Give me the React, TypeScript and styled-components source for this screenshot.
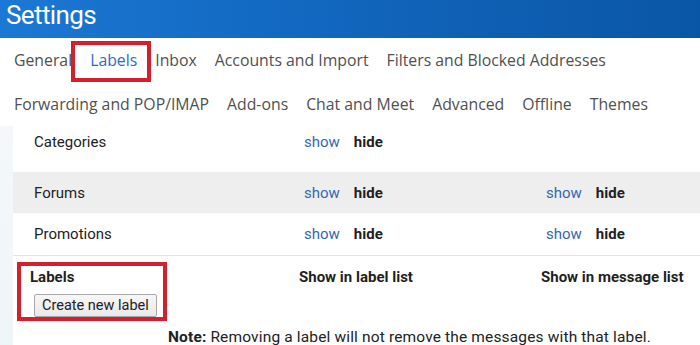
import styled, { createGlobalStyle } from "styled-components";

const GlobalStyle = createGlobalStyle`
  html, body {
    margin: 0;
    padding: 0;
    background: #ffffff;
  }
  body {
    font-family: Roboto, "Liberation Sans", sans-serif;
    width: 700px;
    height: 345px;
    overflow: hidden;
  }
`;

const Header = styled.header`
  height: 38px;
  background: linear-gradient(90deg, #1b78d4 0%, #1267be 45%, #0a56a6 100%);
  display: flex;
  align-items: flex-start;
  padding-left: 6px;
`;

const Title = styled.h1`
  margin: 1px 0 0;
  font-family: Roboto, sans-serif;
  font-weight: 400;
  font-size: 26px;
  line-height: 28px;
  letter-spacing: -0.6px;
  color: #ffffff;
`;

const TabRow = styled.nav`
  height: 44px;
  display: flex;
  align-items: center;
  gap: 18px;
  padding-left: 14px;
`;

const Tab = styled.span<{ $active?: boolean; $marked?: boolean }>`
  position: relative;
  font-family: "Open Sans", sans-serif;
  font-size: 15.8px;
  line-height: 22px;
  color: ${p => (p.$active ? "#2a6cc2" : "#505050")};
  white-space: nowrap;
  &::after {
    content: "";
    display: ${p => (p.$marked ? "block" : "none")};
    position: absolute;
    left: -19px;
    right: -14px;
    top: -8px;
    bottom: -11px;
    border: 4px solid #d41f2c;
  }
`;

const Body = styled.div`
  display: flex;
`;

const Strip = styled.div`
  width: 13px;
  flex: none;
  background: linear-gradient(180deg, #f4f8fb, #eef5f9);
`;

const Content = styled.div`
  flex: 1;
`;

const Row = styled.div<{ $shaded?: boolean; $height: number; $bottom?: number }>`
  display: grid;
  grid-template-columns: 270px 242px 1fr;
  align-items: center;
  height: ${p => p.$height}px;
  padding-left: 21px;
  padding-bottom: ${p => p.$bottom ?? 0}px;
  background: ${p => (p.$shaded ? "#eeeeee" : "#ffffff")};
  font-size: 15px;
  color: #222222;
`;

const Divider = styled.div`
  height: 1px;
  background: #e3e3e3;
`;

const Actions = styled.div`
  display: flex;
  gap: 14px;
`;

const Show = styled.span`
  color: #3467ae;
`;

const Hide = styled.span`
  font-weight: 700;
  color: #1f1f1f;
`;

const LabelsRow = styled.div`
  display: grid;
  grid-template-columns: 286px 242px 1fr;
  padding-top: 13px;
  font-size: 15px;
  font-weight: 700;
  color: #1f1f1f;
`;

const LabelsCell = styled.div`
  position: relative;
  padding-left: 17px;
  &::after {
    content: "";
    position: absolute;
    left: 4px;
    width: 142px;
    top: -7px;
    height: 51px;
    border: 4px solid #d41f2c;
  }
`;

const ColumnHead = styled.div`
  line-height: 17px;
`;

const CreateButton = styled.button`
  display: block;
  margin: 8px 0 0 4px;
  height: 23px;
  padding: 0 7px;
  font-family: Roboto, "Liberation Sans", sans-serif;
  font-size: 14.5px;
  color: #222222;
  background: linear-gradient(180deg, #f7f7f7, #e9e9e9);
  border: 1px solid #a9a9a9;
  border-radius: 2px;
`;

const Note = styled.p`
  margin: 11px 0 0 155px;
  font-size: 15.5px;
  letter-spacing: 0.15px;
  color: #222222;
  white-space: nowrap;
  b {
    font-weight: 700;
  }
`;

const tabsTop = [
  { name: "General" },
  { name: "Labels", active: true },
  { name: "Inbox" },
  { name: "Accounts and Import" },
  { name: "Filters and Blocked Addresses" },
];

const tabsBottom = ["Forwarding and POP/IMAP", "Add-ons", "Chat and Meet", "Advanced", "Offline", "Themes"];

const categories = [
  { name: "Forums", shaded: true, height: 41 },
  { name: "Promotions", shaded: false, height: 42 },
];

function App() {
  return (
    <>
      <GlobalStyle />
      <Header>
        <Title>Settings</Title>
      </Header>
      <TabRow>
        {tabsTop.map(t => (
          <Tab key={t.name} $active={t.active} $marked={t.active}>
            {t.name}
          </Tab>
        ))}
      </TabRow>
      <TabRow>
        {tabsBottom.map(t => (
          <Tab key={t}>{t}</Tab>
        ))}
      </TabRow>
      <Body>
        <Strip />
        <Content>
          <Row $height={32} $bottom={14}>
            <span>Categories</span>
            <Actions>
              <Show>show</Show>
              <Hide>hide</Hide>
            </Actions>
          </Row>
          {categories.map(c => (
            <Row key={c.name} $shaded={c.shaded} $height={c.height}>
              <span>{c.name}</span>
              <Actions>
                <Show>show</Show>
                <Hide>hide</Hide>
              </Actions>
              <Actions>
                <Show>show</Show>
                <Hide>hide</Hide>
              </Actions>
            </Row>
          ))}
          <Divider />
          <LabelsRow>
            <LabelsCell>
              <ColumnHead>Labels</ColumnHead>
              <CreateButton>Create new label</CreateButton>
            </LabelsCell>
            <ColumnHead>Show in label list</ColumnHead>
            <ColumnHead>Show in message list</ColumnHead>
          </LabelsRow>
          <Note>
            <b>Note:</b> Removing a label will not remove the messages with that label.
          </Note>
        </Content>
      </Body>
    </>
  );
}

export default App;
